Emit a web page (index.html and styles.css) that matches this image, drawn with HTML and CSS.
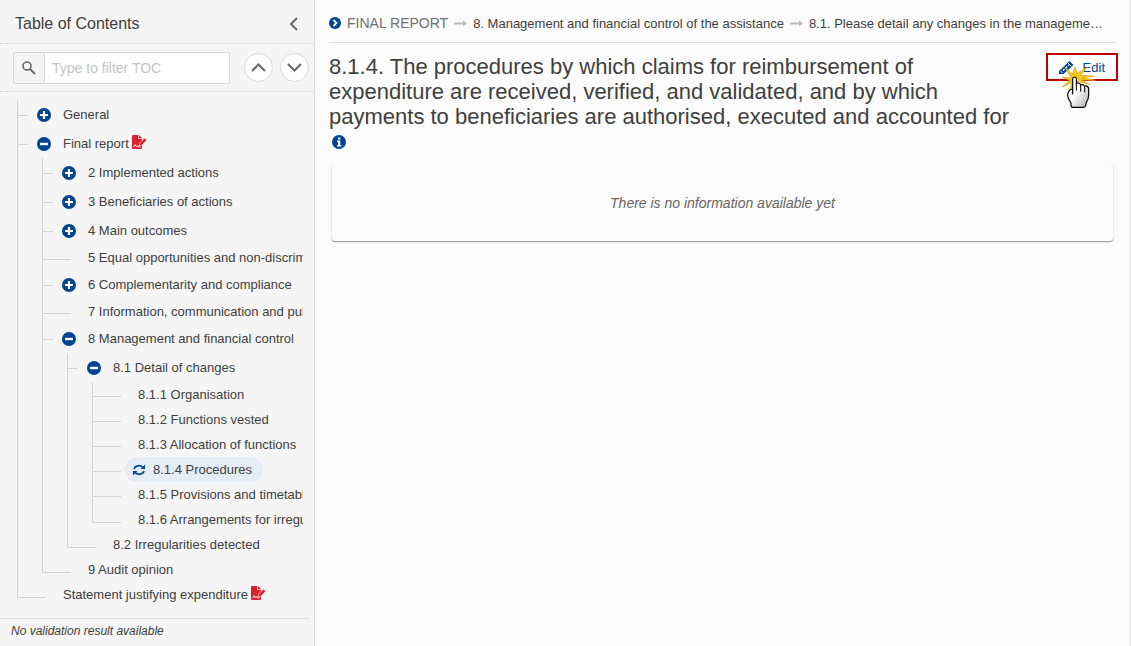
FILE: index.html
```html
<!DOCTYPE html>
<html lang="en">
  <head>
    <meta charset="UTF-8" />
    <meta name="viewport" content="width=device-width, initial-scale=1.0" />
    <title>Final report</title>
    <link rel="stylesheet" href="styles.css">
  </head>
  <body>
    <!-- shared icons -->
    <svg class="symbols" width="0" height="0" aria-hidden="true">
      <symbol id="plus" viewBox="0 0 14 14">
        <circle cx="7" cy="7" r="7" fill="#004494"/>
        <path d="M7 3v8M3 7h8" stroke="#fff" stroke-width="2.2"/>
      </symbol>
      <symbol id="minus" viewBox="0 0 14 14">
        <circle cx="7" cy="7" r="7" fill="#004494"/>
        <path d="M3 7h8" stroke="#fff" stroke-width="2.4"/>
      </symbol>
      <symbol id="signed" viewBox="0 0 15 14">
        <path d="M0 1q0-1 1-1h6l3 3v10q0 1-1 1H1q-1 0-1-1z" fill="#da2131"/>
        <path d="M6.500 0v3.500H10" fill="none" stroke="#f5f5f5" stroke-width=".8"/>
        <path d="M7 11l.5-2.800L12.500 3l2.300 2.100-5 5.300z" fill="#da2131" stroke="#f5f5f5" stroke-width=".6"/>
        <path d="M1.500 12l1.700-2.500L4.500 12l1.300-1.300.8 1.200h2" fill="none" stroke="#fff" stroke-width=".9"/>
      </symbol>
      <symbol id="arrow" viewBox="0 0 13 7">
        <path d="M0 3.500h10" stroke="#bbb" stroke-width="2"/>
        <path d="M9 .5l4 3-4 3z" fill="#bbb"/>
      </symbol>
    </svg>

    <div class="layout">
      <aside class="sidebar">
        <header class="toc-header">
          <h2>Table of Contents</h2>
          <button type="button" class="collapse" aria-label="Collapse">
            <svg width="9" height="14" viewBox="0 0 9 14"><path d="M8 1L2 7l6 6" fill="none" stroke="#666" stroke-width="2"/></svg>
          </button>
        </header>
        <div class="toc-filter">
          <div class="search">
            <label for="filter" aria-label="Filter">
              <svg width="14" height="14" viewBox="0 0 14 14" fill="none" stroke="#666"><circle cx="5" cy="5" r="4" stroke-width="1.600"/><path d="M8 8l5 5" stroke-width="2"/></svg>
            </label>
            <input type="text" id="filter" placeholder="Type to filter TOC">
          </div>
          <button type="button" class="round" aria-label="Previous">
            <svg width="15" height="9" viewBox="0 0 15 9"><path d="M1 8l6.500-6.500L14 8" fill="none" stroke="#666" stroke-width="2"/></svg>
          </button>
          <button type="button" class="round" aria-label="Next">
            <svg width="15" height="9" viewBox="0 0 15 9"><path d="M1 1l6.500 6.500L14 1" fill="none" stroke="#666" stroke-width="2"/></svg>
          </button>
        </div>

        <ul class="tree">
          <li>
            <div class="row parent"><button type="button" aria-label="Expand"><svg><use href="#plus"/></svg></button><a href="#">General</a></div>
          </li>
          <li>
            <div class="row parent"><button type="button" aria-label="Collapse"><svg><use href="#minus"/></svg></button><a href="#">Final report</a><svg class="signed"><use href="#signed"/></svg></div>
            <ul>
              <li><div class="row parent"><button type="button" aria-label="Expand"><svg><use href="#plus"/></svg></button><a href="#">2 Implemented actions</a></div></li>
              <li><div class="row parent"><button type="button" aria-label="Expand"><svg><use href="#plus"/></svg></button><a href="#">3 Beneficiaries of actions</a></div></li>
              <li><div class="row parent"><button type="button" aria-label="Expand"><svg><use href="#plus"/></svg></button><a href="#">4 Main outcomes</a></div></li>
              <li><div class="row leaf"><a href="#">5 Equal opportunities and non-discrimination</a></div></li>
              <li><div class="row parent"><button type="button" aria-label="Expand"><svg><use href="#plus"/></svg></button><a href="#">6 Complementarity and compliance</a></div></li>
              <li><div class="row leaf"><a href="#">7 Information, communication and publicity</a></div></li>
              <li>
                <div class="row parent"><button type="button" aria-label="Collapse"><svg><use href="#minus"/></svg></button><a href="#">8 Management and financial control</a></div>
                <ul>
                  <li>
                    <div class="row parent"><button type="button" aria-label="Collapse"><svg><use href="#minus"/></svg></button><a href="#">8.1 Detail of changes</a></div>
                    <ul>
                      <li><div class="row leaf"><a href="#">8.1.1 Organisation</a></div></li>
                      <li><div class="row leaf"><a href="#">8.1.2 Functions vested</a></div></li>
                      <li><div class="row leaf"><a href="#">8.1.3 Allocation of functions</a></div></li>
                      <li><div class="row leaf"><a href="#" class="active"><svg width="12" height="12" viewBox="0 0 12 12"><path d="M1 5a5 4.500 0 0 1 8.800-1.500M11 7a5 4.500 0 0 1-8.800 1.500" fill="none" stroke="#004494" stroke-width="1.800"/><path d="M12 .5V5H7.500zM0 11.500V7h4.500z" fill="#004494"/></svg>8.1.4 Procedures</a></div></li>
                      <li><div class="row leaf"><a href="#">8.1.5 Provisions and timetable</a></div></li>
                      <li><div class="row leaf"><a href="#">8.1.6 Arrangements for irregularities</a></div></li>
                    </ul>
                  </li>
                  <li><div class="row leaf"><a href="#">8.2 Irregularities detected</a></div></li>
                </ul>
              </li>
              <li><div class="row leaf"><a href="#">9 Audit opinion</a></div></li>
            </ul>
          </li>
          <li><div class="row leaf"><a href="#">Statement justifying expenditure</a><svg class="signed"><use href="#signed"/></svg></div></li>
        </ul>

        <footer class="validation">No validation result available</footer>
      </aside>

      <main>
        <nav class="breadcrumb">
          <svg width="12" height="12" viewBox="0 0 12 12"><circle cx="6" cy="6" r="6" fill="#004494"/><path d="M4.500 3l3 3-3 3" fill="none" stroke="#fff" stroke-width="1.800"/></svg>
          <a href="#" class="root">FINAL REPORT</a>
          <svg width="13" height="7"><use href="#arrow"/></svg>
          <a href="#">8. Management and financial control of the assistance</a>
          <svg width="13" height="7"><use href="#arrow"/></svg>
          <a href="#">8.1. Please detail any changes in the manageme…</a>
        </nav>

        <div class="heading">
          <h1>8.1.4. The procedures by which claims for reimbursement of expenditure are received, verified, and validated, and by which payments to beneficiaries are authorised, executed and accounted for</h1>
          <div class="actions">
            <button type="button" class="edit">
              <svg width="15" height="15" viewBox="0 0 15 15"><path d="M0 11L10.500 1 14.500 5 4.500 14H0z" fill="#004494"/><path d="M9 3l3.500 3.500M1.500 11l2 2" stroke="#fff" stroke-width="1"/><path d="M4 10.500l6-5.500" stroke="#fff" stroke-width="1.600" stroke-dasharray="2 1.500"/></svg>
              Edit
            </button>
            <svg class="pointer" width="37" height="45" viewBox="120 195 111 135" aria-hidden="true">
              <defs><linearGradient id="skin" x1="0" y1="0" x2="1" y2="1"><stop offset=".45" stop-color="#fff"/><stop offset="1" stop-color="#aaa"/></linearGradient></defs>
              <path d="M134 201l23 21 9-21 5 20 30-19-20 24 42 3-36 4 39 8-42-1 25 14-36-10-23 26 5-23-28 14 21-20-21-9 27 2z" fill="#f7c71d" stroke="#d9a300" stroke-width="2"/>
              <path d="M158 282V237q0-6 5-6 6 0 6 6v15q2-4 7-3 5 1 6 6 7-4 11 3 11-2 13 8v18q0 14-7 23l-2 9q-1 6-6 6h-32q-6 0-6-6v-7q-10-15-10-24 1-16 15-18z" fill="url(#skin)" stroke="#000" stroke-width="3.500" stroke-linejoin="round"/>
              <path d="M169 250v22M182 255v20M194 259v18" stroke="#000" stroke-width="3"/>
            </svg>
          </div>
        </div>
        <button type="button" class="info" aria-label="Information">
          <svg width="14" height="14" viewBox="0 0 14 14"><circle cx="7" cy="7" r="7" fill="#004494"/><path d="M6 2.500h2.300v2H6zM5 5.500h3.300V10h1v1.500H5V10h1V7H5z" fill="#fff"/></svg>
        </button>

        <section class="card">
          <p>There is no information available yet</p>
        </section>
      </main>
    </div>
  </body>
</html>
```

FILE: styles.css
```css
*, *::before{
    margin: 0;
    padding: 0;
    box-sizing: border-box;
}
body{
    font-family: "Liberation Sans", Arial, sans-serif;
    font-size: 13px;
    color: #404040;
    background-color: #fbfbfb;
}
a{
    color: inherit;
    text-decoration: none;
}
button{
    font: inherit;
    color: inherit;
    border: none;
    background: none;
    cursor: pointer;
}
svg{
    display: block;
    flex-shrink: 0;
}
.symbols{
    position: absolute;
}
.layout{
    display: flex;
    min-height: 100vh;
    border-right: 1px solid #ddd;
}

/* sidebar */
.sidebar{
    display: flex;
    flex-direction: column;
    flex: 0 0 315px;
    min-width: 0;
    background-color: #f5f5f5;
    border-right: 1px solid #ddd;
}
.toc-header{
    display: flex;
    justify-content: space-between;
    align-items: center;
    height: 44px;
    padding: 4px 16px 0 15px;
    border-bottom: 1px dotted #ccc;
}
.toc-header h2{
    font-size: 16px;
    font-weight: normal;
}
.toc-filter{
    display: flex;
    align-items: center;
    gap: 7px;
    height: 48px;
    padding: 0 5px 0 13px;
    border-bottom: 1px dotted #ccc;
}
.search{
    display: flex;
    flex: 1;
    min-width: 0;
    height: 32px;
    margin-right: 7px;
    border: 1px solid #d8d8d8;
    border-radius: 2px;
}
.search label{
    display: flex;
    align-items: center;
    justify-content: center;
    width: 31px;
    border-right: 1px solid #d8d8d8;
}
.search input{
    flex: 1;
    min-width: 0;
    padding-left: 7px;
    border: none;
    font: inherit;
    font-size: 14px;
    background-color: #fff;
}
.search input::placeholder{
    color: #c4c4c4;
}
.round{
    display: flex;
    flex-shrink: 0;
    align-items: center;
    justify-content: center;
    width: 29px;
    height: 29px;
    border: 1px solid #d8d8d8;
    border-radius: 50%;
    background-color: #fff;
}

/* tree */
.tree{
    flex: 1;
    margin: 8px 11px 0 17px;
    overflow: hidden;
}
.tree ul{
    padding-left: 24px;
}
.tree li{
    list-style: none;
    border-left: 1px solid #d2d2d2;
}
.tree li:last-child{
    border-left-color: transparent;
}
.row{
    display: flex;
    align-items: center;
    white-space: nowrap;
}
.row::before{
    content: "";
    flex-shrink: 0;
    align-self: flex-start;
    width: 10px;
    height: 16px;
    border-bottom: 1px solid #d2d2d2;
}
.row.parent{
    height: 29px;
}
.row.leaf{
    height: 25px;
}
.row.leaf::before{
    width: 28px;
    height: 15px;
}
.tree li:last-child > .row.leaf::before{
    width: 29px;
    height: 16px;
    margin-left: -1px;
    border-left: 1px solid #d2d2d2;
}
.row button{
    margin: 0 12px 0 9px;
}
.row button svg{
    width: 14px;
    height: 14px;
}
.row.leaf a{
    margin-left: 4px;
    padding-left: 13px;
}
.row.leaf .active{
    display: flex;
    align-items: center;
    gap: 8px;
    height: 25px;
    padding: 0 11px 0 8px;
    border-radius: 13px;
    background-color: #e6ecf5;
}
.signed{
    width: 15px;
    height: 14px;
    margin: 0 0 4px 3px;
}
.validation{
    height: 28px;
    margin-right: 4px;
    padding-left: 11px;
    border-top: 1px solid #ddd;
    font-size: 12px;
    font-style: italic;
    line-height: 24px;
}

/* content */
main{
    flex: 1;
    min-width: 0;
    padding: 0 12px 0 14px;
}
.breadcrumb{
    display: flex;
    align-items: center;
    gap: 6px;
    height: 43px;
    margin-right: 2px;
    padding-top: 4px;
    border-bottom: 1px solid #ddd;
    white-space: nowrap;
}
.breadcrumb .root{
    font-size: 14px;
    color: #707070;
}
.heading{
    display: flex;
    justify-content: space-between;
    align-items: flex-start;
    padding-top: 10px;
}
.heading h1{
    max-width: 690px;
    padding-top: 1px;
    font-size: 22px;
    font-weight: normal;
    line-height: 25px;
}
.actions{
    position: relative;
}
.edit{
    display: flex;
    align-items: center;
    gap: 9px;
    height: 28px;
    padding: 0 11px;
    border: 2px solid #c00000;
    background-color: #fff;
    color: #004494;
}
.pointer{
    position: absolute;
    left: 14px;
    top: 12px;
    pointer-events: none;
}
.info{
    margin: 6px 0 0 3px;
}
.card{
    margin: 13px 5px 0 3px;
    padding: 28px 0;
    border-radius: 3px;
    box-shadow: 0 1px 1px #999, 0 1px 2px #ddd;
    text-align: center;
}
.card p{
    font-size: 14px;
    font-style: italic;
    line-height: 20px;
    color: #666;
}
```
